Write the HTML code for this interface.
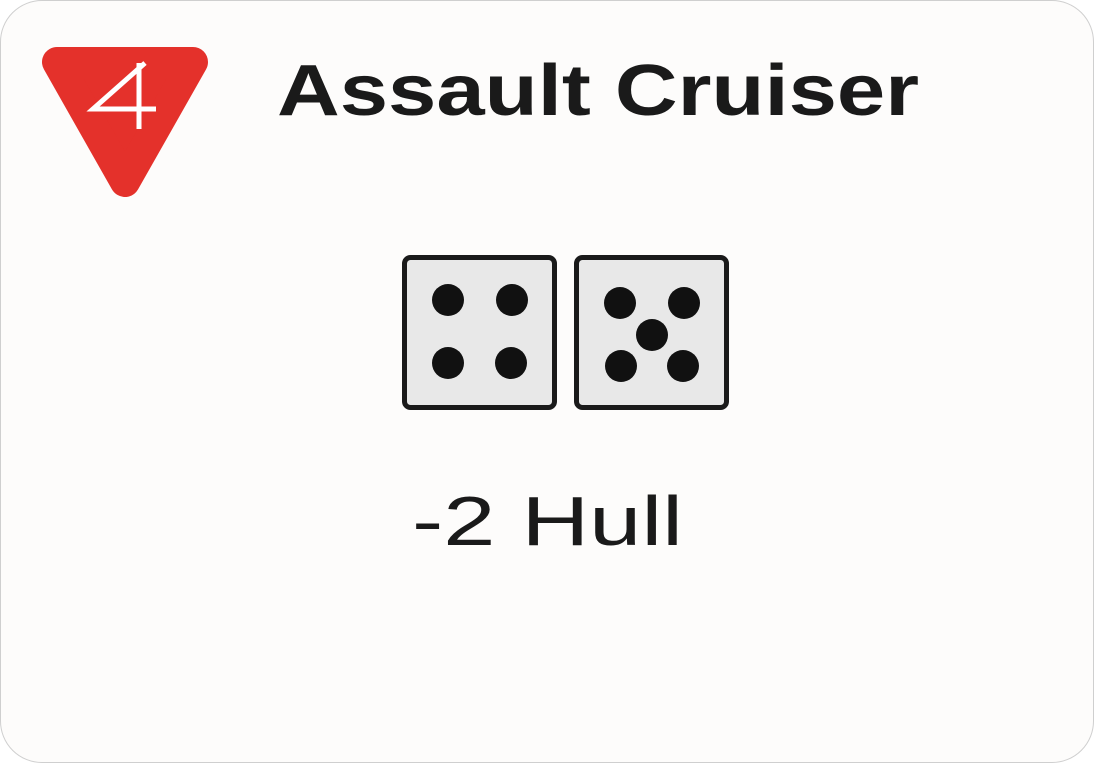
<!DOCTYPE html>
<html><head><meta charset="utf-8"><style>
html,body{margin:0;padding:0;background:#fff;}
body{width:1094px;height:763px;overflow:hidden;position:relative;}
.card{position:absolute;left:0;top:0;width:1092px;height:761px;border:1px solid #cfcfcf;border-radius:42px;background:#fdfcfb;}
svg{position:absolute;left:0;top:0;}
</style></head><body>
<div class="card"></div>
<svg width="1094" height="763" viewBox="0 0 1094 763">
<path d="M57 62 L193 62 L125 182 Z" fill="#e4312b" stroke="#e4312b" stroke-width="30" stroke-linejoin="round"/>
<path d="M145 63 L93 109 L156 109 M139 63 L139 129" fill="none" stroke="#fff" stroke-width="5"/>
<text x="277" y="115" font-family="Liberation Sans, sans-serif" font-weight="bold" font-size="72" textLength="642" lengthAdjust="spacingAndGlyphs" fill="#1a1a1a">Assault Cruiser</text>
<rect x="404.5" y="257.5" width="150" height="150" rx="6" fill="#e8e8e8" stroke="#1a1a1a" stroke-width="5"/>
<rect x="576.5" y="257.5" width="150" height="150" rx="6" fill="#e8e8e8" stroke="#1a1a1a" stroke-width="5"/>
<g fill="#111">
<circle cx="448" cy="300" r="16"/><circle cx="512" cy="300" r="16"/><circle cx="448" cy="363" r="16"/><circle cx="511" cy="363" r="16"/>
<circle cx="620" cy="303" r="16"/><circle cx="684" cy="303" r="16"/><circle cx="652" cy="335" r="16"/><circle cx="621" cy="366" r="16"/><circle cx="683" cy="366" r="16"/>
</g>
<text x="412" y="545" font-family="Liberation Sans, sans-serif" font-size="70" textLength="271" lengthAdjust="spacingAndGlyphs" fill="#1a1a1a">-2 Hull</text>
</svg>
</body></html>
